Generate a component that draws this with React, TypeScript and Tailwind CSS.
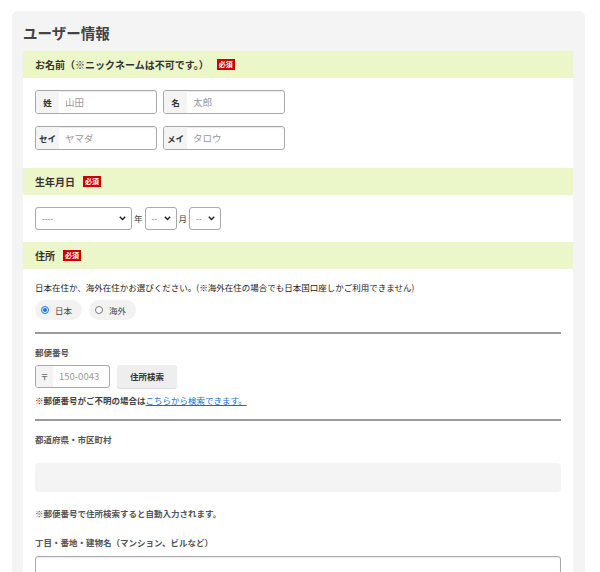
import React from 'react';

const FONT = { fontFamily: '"Noto Sans CJK JP", "Noto Sans", sans-serif' };

function Badge() {
  return (
    <span className="inline-flex h-[11px] items-center bg-[#cc0000] px-[2px] text-[7px] font-bold leading-none text-white">
      必須
    </span>
  );
}

function SectionHead({ title }: { title: string }) {
  return (
    <div className="flex h-[27px] items-center gap-[8px] bg-[#ebf6c9] px-[12px] text-[10px] font-bold text-[#333]">
      <span>{title}</span>
      <Badge />
    </div>
  );
}

function LabeledInput({ label, placeholder }: { label: string; placeholder: string }) {
  return (
    <div className="flex h-[24px] w-[122px] overflow-hidden rounded-[3px] border border-[#a9a9a9] shadow-[inset_0_1px_1px_rgba(0,0,0,0.08)]">
      <div className="flex w-[23px] items-center justify-center bg-[#f4f4f4] text-[8.5px] font-bold text-[#333]">{label}</div>
      <div className="flex items-center pl-[6px] text-[9.5px] text-[#999]">{placeholder}</div>
    </div>
  );
}

function Chevron() {
  return (
    <svg width="7" height="5" viewBox="0 0 7 5" className="shrink-0">
      <path d="M0.8 0.8 L3.5 3.6 L6.2 0.8" fill="none" stroke="#222" strokeWidth="1.4" />
    </svg>
  );
}

function FakeSelect({ w, text }: { w: string; text: string }) {
  return (
    <div className={`flex h-[23px] ${w} items-center justify-between rounded-[3px] border border-[#a9a9a9] pl-[6px] pr-[5px]`}>
      <span className="text-[8px] text-[#666]">{text}</span>
      <Chevron />
    </div>
  );
}

function Radio({ checked, label }: { checked: boolean; label: string }) {
  return (
    <div className="flex h-[20px] items-center gap-[6px] rounded-full bg-[#f2f2f2] pl-[6px] pr-[10px]">
      {checked ? (
        <span className="flex h-[8px] w-[8px] items-center justify-center rounded-full border border-[#1a73e8]">
          <span className="h-[4px] w-[4px] rounded-full bg-[#1a73e8]" />
        </span>
      ) : (
        <span className="h-[8px] w-[8px] rounded-full border border-[#777] bg-white" />
      )}
      <span className="text-[8.5px] text-[#444]">{label}</span>
    </div>
  );
}

export default function App() {
  return (
    <div className="h-[572px] overflow-hidden bg-white pl-[12px] pr-[15px] pt-[11px]" style={FONT}>
      <div className="rounded-[6px] bg-[#f4f4f4] pl-[11px] pr-[12px]">
        <div className="flex h-[40px] items-center pt-[3px] text-[14.5px] font-bold text-[#444]">ユーザー情報</div>

        <div className="bg-white">
          <SectionHead title="お名前（※ニックネームは不可です。）" />
          <div className="flex flex-col gap-[12px] px-[12px] pb-[18px] pt-[12px]">
            <div className="flex gap-[6px]">
              <LabeledInput label="姓" placeholder="山田" />
              <LabeledInput label="名" placeholder="太郎" />
            </div>
            <div className="flex gap-[6px]">
              <LabeledInput label="セイ" placeholder="ヤマダ" />
              <LabeledInput label="メイ" placeholder="タロウ" />
            </div>
          </div>

          <SectionHead title="生年月日" />
          <div className="flex items-center px-[12px] py-[12px] text-[8.5px] text-[#444]">
            <FakeSelect w="w-[97px]" text="----" />
            <span className="mx-[2px]">年</span>
            <FakeSelect w="w-[32px]" text="--" />
            <span className="mx-[2px]">月</span>
            <FakeSelect w="w-[32px]" text="--" />
          </div>

          <SectionHead title="住所" />
          <div className="px-[12px] pt-[12px]">
            <p className="text-[8.5px] leading-[12px] text-[#222]">
              日本在住か、海外在住かお選びください。(※海外在住の場合でも日本国口座しかご利用できません)
            </p>
            <div className="mt-[7px] flex gap-[7px]">
              <Radio checked label="日本" />
              <Radio checked={false} label="海外" />
            </div>
            <div className="mt-[12px] h-[2px] bg-[#9a9a9a]" />

            <div className="mt-[12px] text-[8.5px] font-bold leading-[12px] text-[#555]">郵便番号</div>
            <div className="mt-[7px] flex gap-[7px]">
              <div className="flex h-[23px] w-[75px] overflow-hidden rounded-[3px] border border-[#a9a9a9]">
                <div className="flex w-[17px] items-center justify-center bg-[#f4f4f4] text-[8px] font-bold text-[#666]">〒</div>
                <div className="flex items-center pl-[6px] text-[9.5px] text-[#999]">150-0043</div>
              </div>
              <button className="h-[23px] w-[60px] rounded-[3px] bg-[#eeeeee] text-[8.5px] font-bold text-[#333] shadow-[0_1px_1px_rgba(0,0,0,0.15)]">
                住所検索
              </button>
            </div>
            <p className="mt-[6px] text-[8.5px] font-bold leading-[12px] text-[#444]">
              ※郵便番号がご不明の場合は
              <span className="font-normal text-[#1a6dcc] underline">こちらから検索できます。</span>
            </p>
            <div className="mt-[13px] h-[2px] bg-[#9a9a9a]" />

            <div className="mt-[12px] text-[8.5px] font-bold leading-[12px] text-[#555]">都道府県・市区町村</div>
            <div className="mt-[18px] h-[29px] rounded-[4px] bg-[#f4f4f4]" />
            <p className="mt-[15px] text-[8.5px] font-bold leading-[12px] text-[#555]">※郵便番号で住所検索すると自動入力されます。</p>
            <div className="mt-[17px] text-[8.5px] font-bold leading-[12px] text-[#555]">丁目・番地・建物名（マンション、ビルなど）</div>
            <div className="mt-[8px] h-[28px] rounded-[3px] border border-[#a9a9a9] shadow-[inset_0_1px_1px_rgba(0,0,0,0.08)]" />
            <div className="h-[20px]" />
          </div>
        </div>
      </div>
    </div>
  );
}
